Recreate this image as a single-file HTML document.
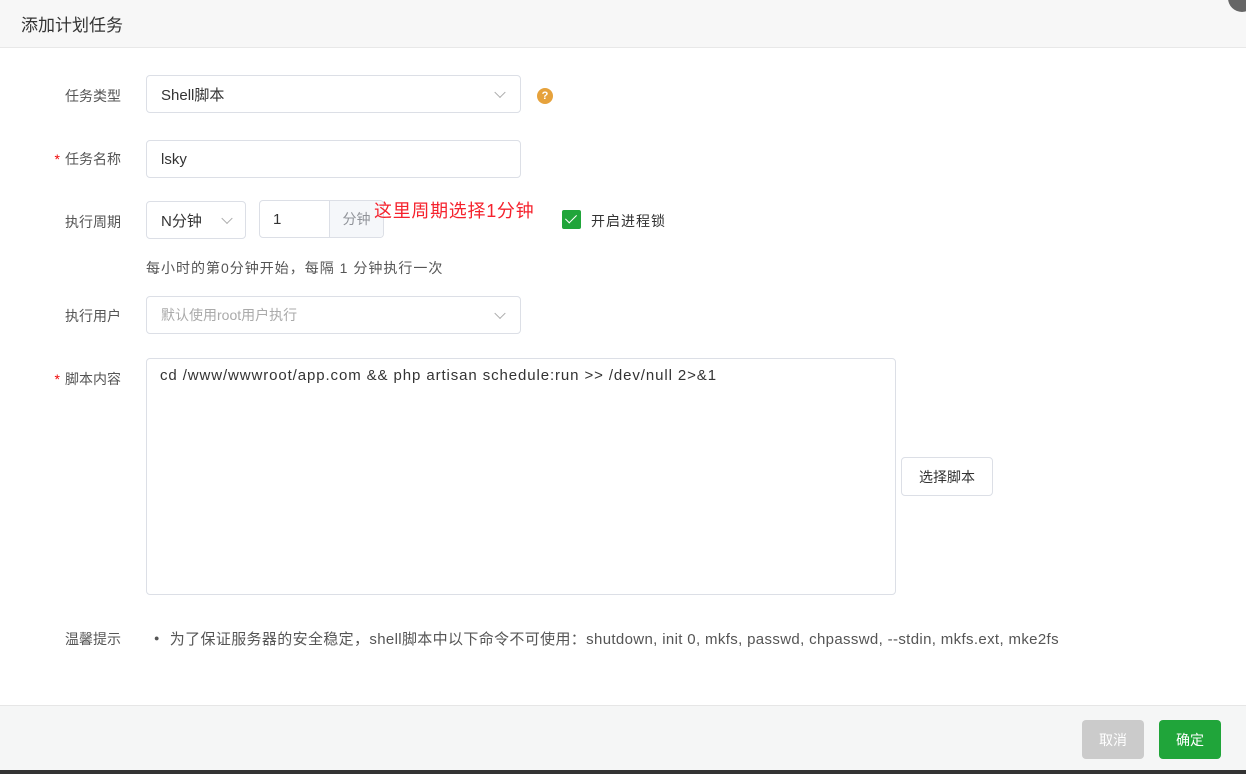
<!DOCTYPE html>
<html><head><meta charset="utf-8"><style>
*{box-sizing:border-box;margin:0;padding:0}
body{width:1246px;height:774px;overflow:hidden;background:#333;font-family:"Liberation Sans","Noto Sans CJK SC",sans-serif;position:relative}
.dlg{position:absolute;left:0;top:0;width:1246px;height:770px;background:#fff;overflow:hidden}
.hd{height:48px;background:#f7f7f7;border-bottom:1px solid #e8e8e8;font-size:17px;color:#333;padding:11px 21px}
.lbl{position:absolute;width:121px;text-align:right;font-size:14px;color:#555}
.lbl i{color:#ef0808;font-style:normal;margin-right:5px}
.box{position:absolute;border:1px solid #dcdfe6;border-radius:4px;background:#fff;font-size:15px;color:#333;padding:0 14px;display:flex;align-items:center}
.chev{position:absolute;right:16px;top:50%;width:8px;height:8px;border-right:1px solid #aaa;border-bottom:1px solid #aaa;transform:translateY(-70%) rotate(45deg)}
.ft{position:absolute;left:0;top:705px;width:1246px;height:65px;background:#f5f6f6;border-top:1px solid #e6e6e6}
.btn{position:absolute;top:14px;height:39px;border-radius:4px;color:#fff;font-size:14px;display:flex;align-items:center;justify-content:center}
</style></head><body>
<div class="dlg">
<div class="hd">添加计划任务</div>
<div class="lbl" style="top:86px">任务类型</div>
<div class="box" style="left:146px;top:75px;width:375px;height:38px">Shell脚本<span class="chev"></span></div>
<div style="position:absolute;left:537px;top:88px;width:16px;height:16px;border-radius:50%;background:#e6a23c;color:#fff;font-size:11px;font-weight:bold;text-align:center;line-height:16px">?</div>
<div class="lbl" style="top:149px"><i>*</i>任务名称</div>
<div class="box" style="left:146px;top:140px;width:375px;height:38px">lsky</div>
<div class="lbl" style="top:212px">执行周期</div>
<div class="box" style="left:146px;top:201px;width:100px;height:38px">N分钟<span class="chev" style="right:14px"></span></div>
<div class="box" style="left:259px;top:200px;width:125px;height:38px;padding:0">
<span style="padding-left:13px;width:69px">1</span>
<span style="height:100%;flex:1;background:#f5f7fa;border-left:1px solid #dcdfe6;color:#909399;font-size:14px;display:flex;align-items:center;justify-content:center;border-radius:0 4px 4px 0">分钟</span></div>
<div style="position:absolute;left:374px;top:197px;font-size:18px;color:#f5222d;letter-spacing:0.7px">这里周期选择1分钟</div>
<div style="position:absolute;left:562px;top:210px;width:19px;height:19px;background:#20a53a;border-radius:2px"><div style="position:absolute;left:6px;top:2px;width:6px;height:11px;border-right:1.5px solid #fff;border-bottom:1.5px solid #fff;transform:rotate(45deg)"></div></div>
<div style="position:absolute;left:591px;top:211px;font-size:14px;color:#333;letter-spacing:1px">开启进程锁</div>
<div style="position:absolute;left:146px;top:258px;font-size:14px;color:#555;letter-spacing:1px">每小时的第0分钟开始，每隔 1 分钟执行一次</div>
<div class="lbl" style="top:306px">执行用户</div>
<div class="box" style="left:146px;top:296px;width:375px;height:38px;color:#aaa;font-size:14px">默认使用root用户执行<span class="chev"></span></div>
<div class="lbl" style="top:369px"><i>*</i>脚本内容</div>
<div class="box" style="left:146px;top:358px;width:750px;height:237px;align-items:flex-start;padding-top:8px;padding-left:13px;font-size:15px;color:#333;letter-spacing:0.9px">cd /www/wwwroot/app.com &amp;&amp; php artisan schedule:run &gt;&gt; /dev/null 2&gt;&amp;1</div>
<div class="box" style="left:901px;top:457px;width:92px;height:39px;font-size:14px;justify-content:center;padding:0">选择脚本</div>
<div class="lbl" style="top:629px">温馨提示</div>
<div style="position:absolute;left:154px;top:628px;font-size:15px;color:#555;letter-spacing:0.35px;white-space:nowrap"><span style="font-size:9px;margin-right:10px;vertical-align:3px">●</span>为了保证服务器的安全稳定，shell脚本中以下命令不可使用：shutdown, init 0, mkfs, passwd, chpasswd, --stdin, mkfs.ext, mke2fs</div>
<div class="ft">
<div class="btn" style="left:1082px;width:62px;background:#cbcbcb">取消</div>
<div class="btn" style="left:1159px;width:62px;background:#20a53a">确定</div>
</div>
</div>
<div style="position:absolute;left:1228px;top:-16px;width:28px;height:28px;border-radius:50%;background:#666"></div>
</body></html>
